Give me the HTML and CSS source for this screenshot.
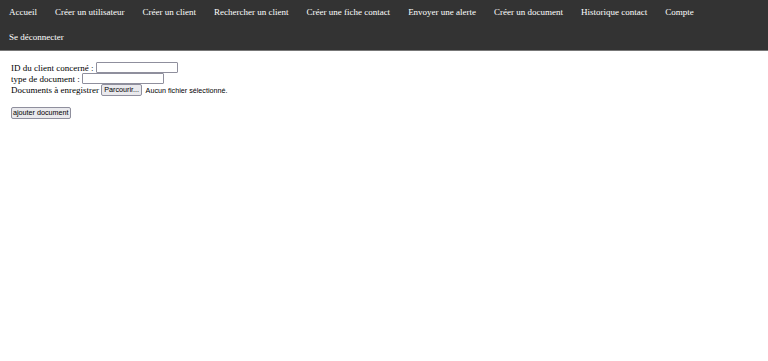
FILE: index.html
```html
<!DOCTYPE html>
<html lang="fr">
<head>
    <meta charset="UTF-8">
    <meta name="viewport" content="width=device-width, initial-scale=1.0">
    <title>Créer un document</title>
    <link rel="stylesheet" href="styles.css">
</head>
<body>
    <ul class="topnav">
        <li><a href="#">Accueil</a></li>
        <li><a href="#">Créer un utilisateur</a></li>
        <li><a href="#">Créer un client</a></li>
        <li><a href="#">Rechercher un client</a></li>
        <li><a href="#">Créer une fiche contact</a></li>
        <li><a href="#">Envoyer une alerte</a></li>
        <li><a href="#">Créer un document</a></li>
        <li><a href="#">Historique contact</a></li>
        <li><a href="#">Compte</a></li>
        <li><a href="#">Se déconnecter</a></li>
    </ul>

    <form class="doc-form">
        <div class="row">ID du client concerné : <input type="text" class="txt"></div>
        <div class="row">type de document : <input type="text" class="txt"></div>
        <div class="row">Documents à enregistrer <span class="file"><span class="btn">Parcourir...</span> Aucun fichier sélectionné.</span></div>
        <div class="submit-row"><button type="button" class="btn submit">ajouter document</button></div>
    </form>
</body>
</html>
```

FILE: styles.css
```css
body {
    margin: 0;
    font-family: "Liberation Serif", "Times New Roman", serif;
    background: #fff;
    color: #000;
}
.topnav {
    list-style: none;
    margin: 0;
    padding: 0 20px 0 0;
    display: flex;
    flex-wrap: wrap;
    background: #333;
    border-bottom: 1px solid #777;
}
.topnav a {
    display: block;
    padding: 7px 9px;
    line-height: 11px;
    font-size: 9px;
    color: #fff;
    text-decoration: none;
}
.doc-form {
    padding: 11px 11px;
    font-size: 9px;
}
.row {
    height: 11.3px;
    display: flex;
    align-items: center;
    white-space: pre;
}
.txt {
    width: 82px;
    height: 11px;
    box-sizing: border-box;
    margin: 0;
    padding: 0;
    border: 1px solid #8f8f9d;
    border-radius: 1px;
    font-size: 8px;
}
.file {
    display: flex;
    align-items: center;
    font-family: "Liberation Sans", Arial, sans-serif;
    font-size: 7.2px;
    color: #000;
}
.btn {
    display: inline-block;
    box-sizing: border-box;
    height: 12px;
    line-height: 10px;
    padding: 0 2px;
    margin: 0 2px 0 0;
    border: 1px solid #8f8f9d;
    border-radius: 2px;
    background: #e9e9ed;
    font-family: "Liberation Sans", Arial, sans-serif;
    font-size: 7.2px;
    color: #000;
}
.submit {
    padding: 0 1px;
}
.submit-row {
    margin-top: 11px;
}
```
